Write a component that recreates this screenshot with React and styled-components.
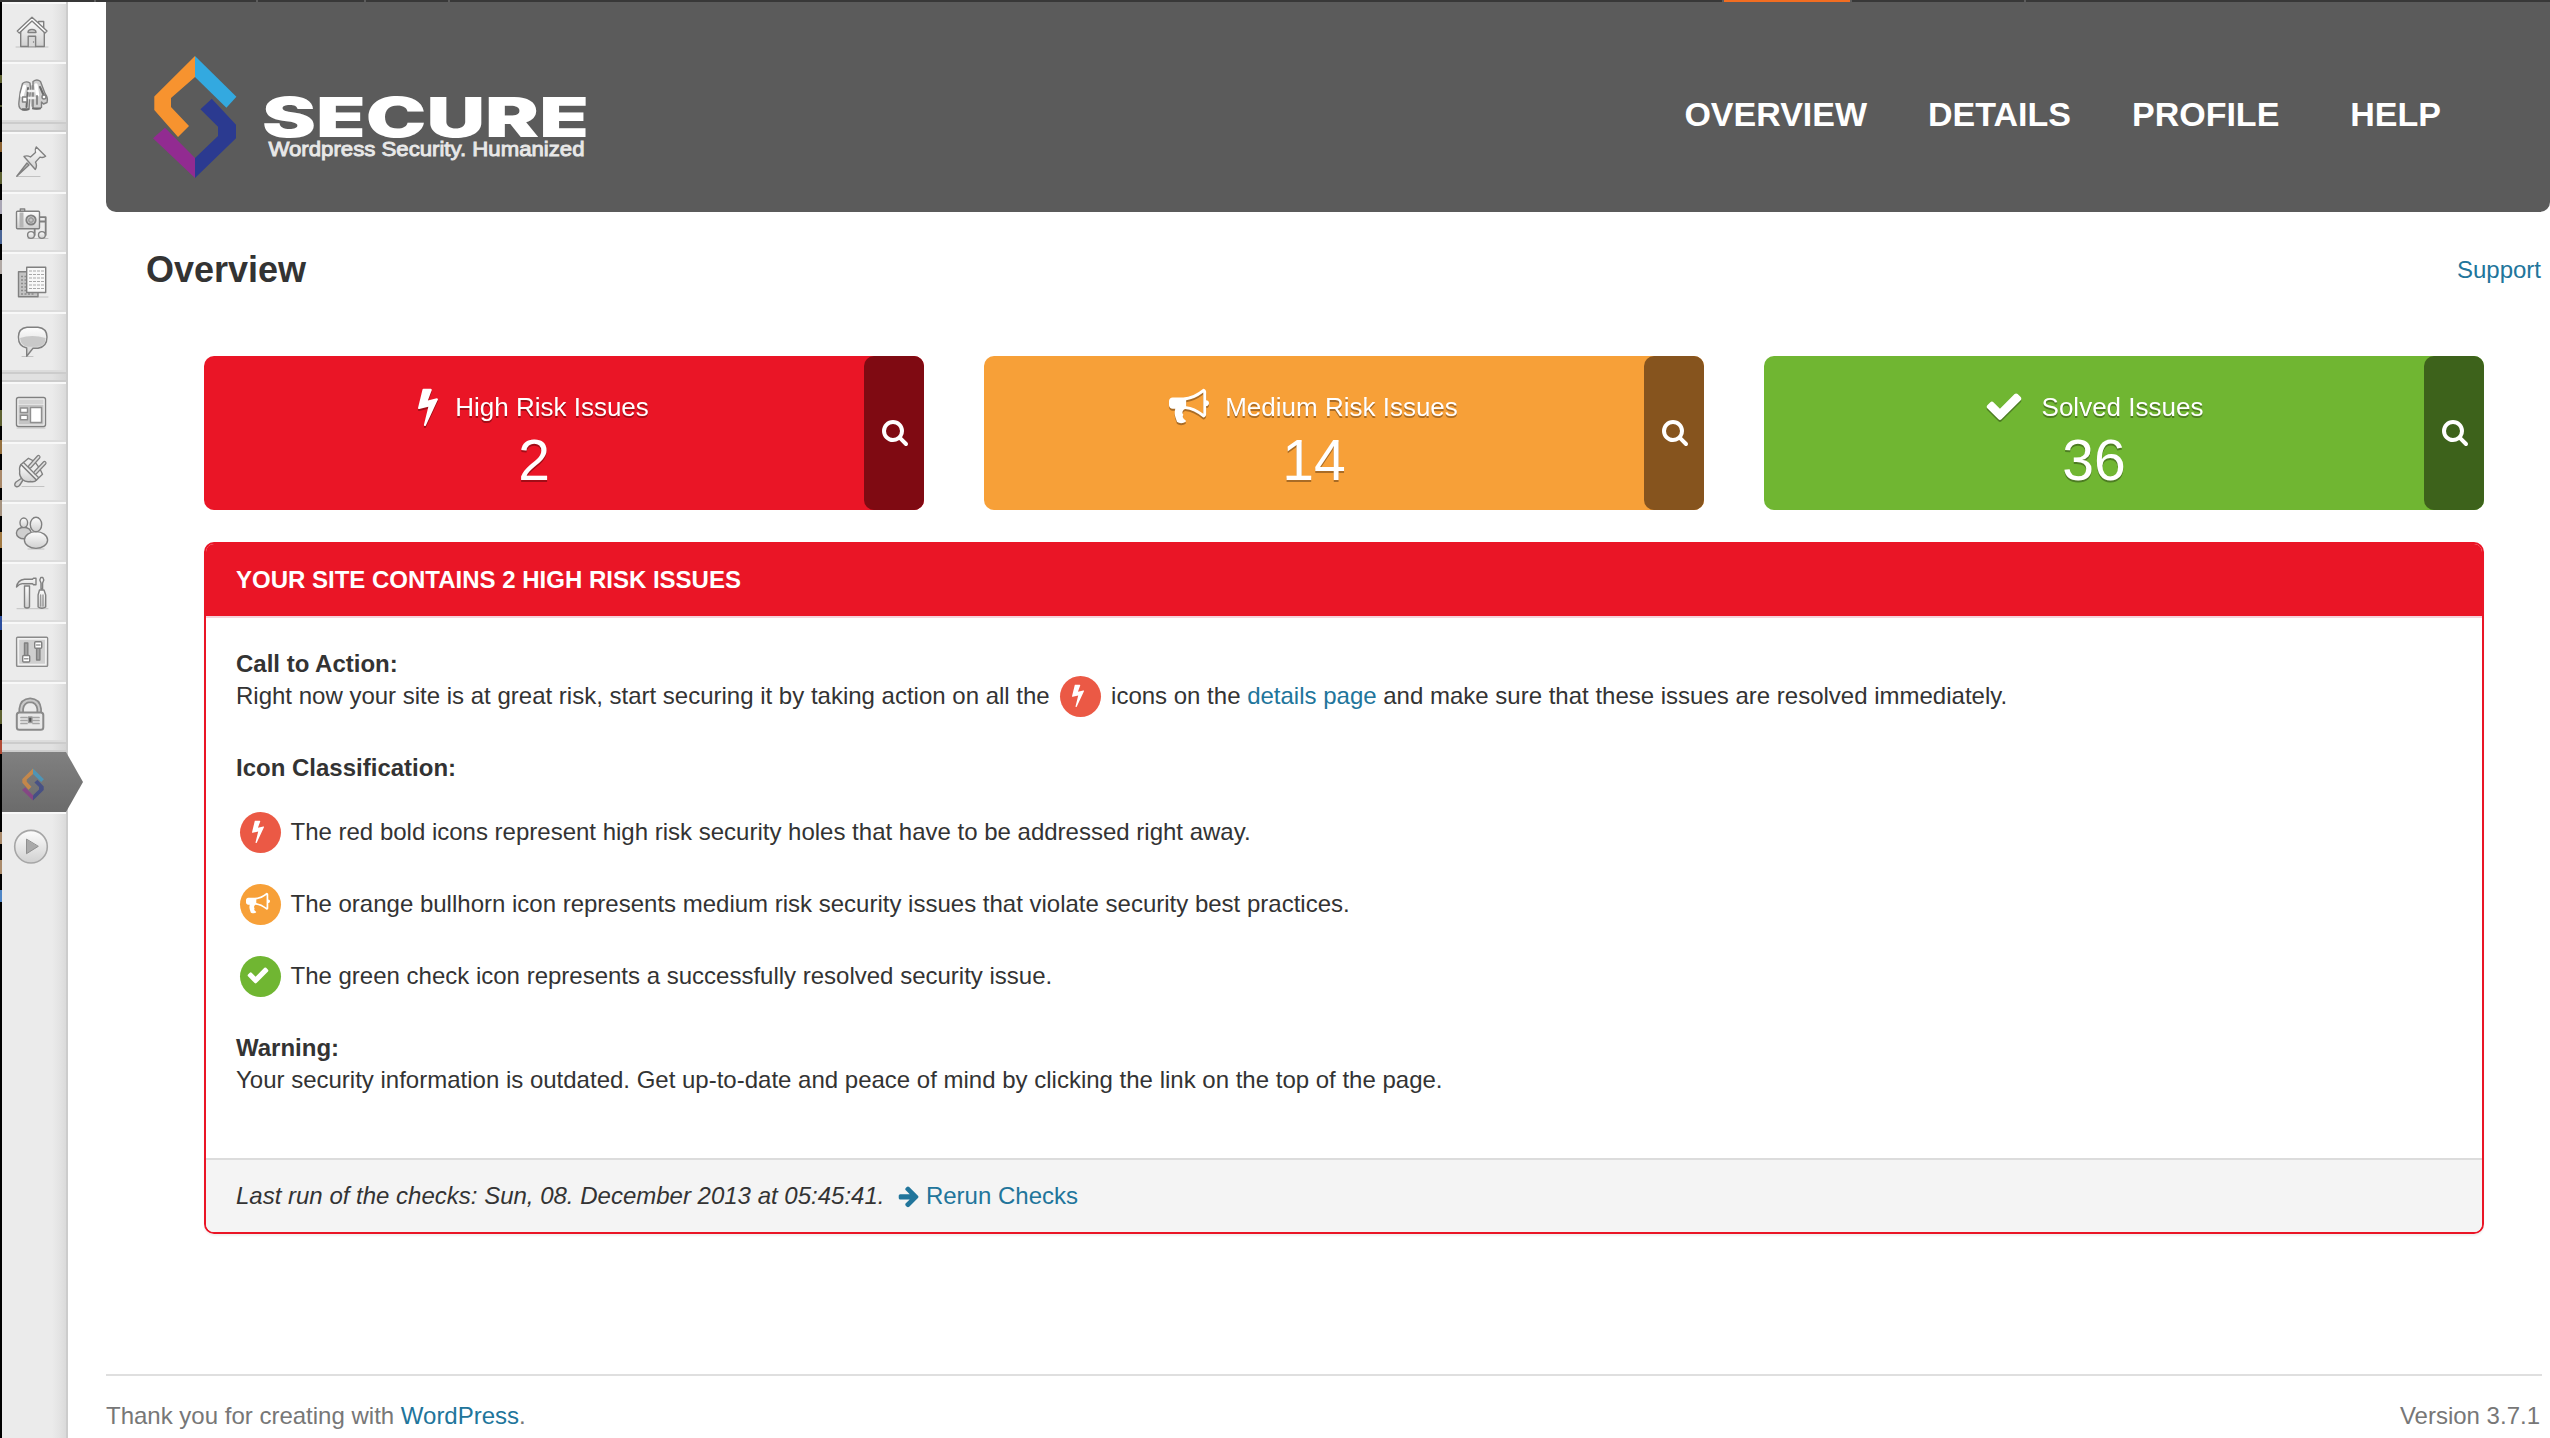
import React from "react";
import styled, { createGlobalStyle } from "styled-components";

const RED = "#ea1526";
const LINK = "#21759b";

const GlobalStyle = createGlobalStyle`
  *, *::before, *::after { box-sizing: border-box; }
  body {
    margin: 0;
    background: #fff;
    color: #333;
    font: 24px/32px "Liberation Sans", Arial, sans-serif;
    overflow: hidden;
  }
`;

/* ---------- frame ---------- */

const Page = styled.div`
  display: flex;
  flex-direction: column;
  height: 1438px;
`;

const TopStrip = styled.div`
  display: flex;
  flex: none;
  height: 2px;
  background: #383838;
`;

const StripTab = styled.span`
  width: ${(p) => p.$w}px;
  border-right: 2px solid #5c5c5c;
  background: ${(p) => (p.$active ? "#f26d21" : "transparent")};
`;

const Columns = styled.div`
  display: flex;
  flex: 1;
  min-height: 0;
`;

const BackdropEdge = styled.div`
  flex: none;
  width: 2px;
  background: linear-gradient(
    #000 73px, #5d6132 73px 81px, #000 81px 103px, #4a4f2a 103px 105px,
    #000 105px 140px, #8b6232 140px 150px, #000 150px 170px, #5d6132 170px 182px,
    #000 182px 198px, #a9a6b5 198px 212px, #000 212px 228px, #4a6596 228px 242px,
    #000 242px 258px, #b0a8a4 258px 272px, #000 272px 408px, #5d6132 408px 424px,
    #000 424px 438px, #94703f 438px 452px, #000 452px 468px, #a9896a 468px 486px,
    #000 486px 498px, #a5927f 498px 514px, #000 514px 530px, #a27a44 530px 546px,
    #000 546px 614px, #2b4d9c 614px 628px, #000 628px 708px, #5d6132 708px 722px,
    #000 722px 738px, #b04a35 738px 752px, #000 752px 830px, #a98a6b 830px 842px,
    #000 842px 858px, #a98a6b 858px 872px, #000 872px 888px, #4f86c6 888px 900px,
    #000 900px
  );
`;

/* ---------- sidebar ---------- */

const Sidebar = styled.nav`
  flex: none;
  display: flex;
  flex-direction: column;
  width: 66px;
  border-right: 2px solid #ccc;
  background: linear-gradient(90deg, #ebebeb 50px, #e4e4e4 57px, #dadada 64px);
`;

const MenuItem = styled.a`
  display: block;
  height: ${(p) => (p.$last ? "auto" : "60px")};
  border-top: 2px solid #f8f8f8;
  border-bottom: ${(p) => (p.$last ? "none" : "2px solid #dcdcdc")};
`;

const ActiveItem = styled.a`
  display: block;
  width: 81px;
  height: 60px;
  background: linear-gradient(#808080, #6b6b6b);
  clip-path: polygon(0 0, 64px 0, 81px 30px, 64px 60px, 0 60px);
`;

const MenuGap = styled.div`
  height: 10px;
  border: solid #ccc;
  border-width: 2px 0;
  background: linear-gradient(90deg, #e1e1e1 50px, #d4d4d4 64px);
`;

const Glyph = styled.svg`
  display: block;
  width: 64px;
  height: 60px;
  margin-top: ${(p) => (p.$flush ? 0 : -2)}px;
  fill: url(#metal);
  stroke: #808080;
  stroke-width: 1.4;
  stroke-linejoin: round;
  stroke-linecap: round;
`;

const Shadow = ({ x1, x2, y }) => (
  <path d={`M${x1} ${y}H${x2}`} stroke="#c2c2c2" strokeWidth="1" />
);

const HomeGlyph = () => (
  <Glyph viewBox="0 0 64 60">
    <defs>
      <linearGradient id="metal" x1="0" y1="0" x2="0" y2="1">
        <stop offset="0" stopColor="#fdfdfd" />
        <stop offset="1" stopColor="#d0d0d0" />
      </linearGradient>
    </defs>
    <Shadow x1={14} x2={46} y={45} />
    <path d="M36.5 25v-5.500h5.200v10" fill="#f2f2f2" />
    <path d="M18.700 29v15.500h23.600V29L30 17.500z" />
    <path d="M30 15.300L15.300 29l2 2L30 19l13 12 2-2z" fill="#fff" />
    <path d="M26.200 44.500V34.200h7.400v10.300M26 30.500q0-3 4-3t4 3z" fill="#d8d8d8" />
    <circle cx="31.500" cy="40" r=".7" fill="#777" stroke="none" />
  </Glyph>
);

const BinocularsGlyph = () => (
  <Glyph viewBox="0 0 64 60">
    <path d="M20.500 21.500q3.500-3 7.500-.5l.5 5-1.500 21q-4 2.500-7.500.5-3.500-2-2.500-8 .5-9 3.500-18z" fill="#d6d6d6" />
    <path d="M31 19.500q4-3 7.500 0l4.500 12q3.500 5 2 9l-3.500 1.500-2-2v5.500q-4.500 3-8.500.5z" fill="#cfcfcf" />
    <path d="M22.500 24.500l-2.500 9M34 23l1.500 10" stroke="#fff" strokeWidth="3.500" />
    <path d="M26 26l-1.500 19M38 25l4 9" stroke="#6a6a6a" strokeWidth="2" />
    <path d="M35 34v8M30.500 24v20" stroke="#8a8a8a" strokeWidth="2" />
    <path d="M26.500 29h6M26.500 36h6" stroke="#f0f0f0" strokeWidth="2.500" />
    <path d="M20.500 47.300h6M31 46.500h7" stroke="#6d6d6d" strokeWidth="2" />
    <rect x="20.500" y="35" width="4.500" height="5" fill="#fff" />
    <circle cx="42" cy="35" r="2" fill="#fff" />
  </Glyph>
);

const PinGlyph = () => (
  <Glyph viewBox="0 0 64 60">
    <Shadow x1={15} x2={38} y={44.5} />
    <path d="M27 33L14.800 44.300 25 31z" fill="#bbb" />
    <path d="M22 24.500q3-1.500 6.500.5l5-4.500q-1-3 .8-5.600l9.300 9.300q-2.500 2-5.600.9l-4.500 5q2 3.500-.2 7.400z" />
  </Glyph>
);

const MediaGlyph = () => (
  <Glyph viewBox="0 0 64 60">
    <Shadow x1={26} x2={46} y={46.5} />
    <path d="M32.700 43V25.200h11V43M32.700 29.500h11" fill="none" strokeWidth="1.800" />
    <circle cx="29" cy="43" r="3.400" />
    <circle cx="39.900" cy="43" r="3.400" />
    <path d="M18.300 19v-2h4.400v2" />
    <rect x="14.500" y="19.200" width="23" height="17.500" rx="1" />
    <path d="M17.500 20.500h4v15h-4z" fill="#b5b5b5" stroke="none" />
    <circle cx="29" cy="28" r="4.600" strokeWidth="2" />
    <circle cx="29" cy="28" r="2.300" fill="#c5c5c5" stroke="#999" />
  </Glyph>
);

const PagesGlyph = () => (
  <Glyph viewBox="0 0 64 60">
    <Shadow x1={36} x2={46} y={45} />
    <path d="M16.500 19.700H36v25H16.500z" fill="#c3c3c3" />
    <path
      d="M19 24.500h5M19 28h5M19 31.500h5M19 35h5M19 38.500h5M19 42h14"
      stroke="#8c8c8c"
      strokeDasharray="2 1.500"
      strokeLinecap="butt"
    />
    <path d="M24.700 15.200h19v25.300h-19z" fill="#f8f8f8" />
    <path
      d="M27 19h15M27 22.500h15M27 26h15M27 29.500h15M27 33h15M27 36.500h15"
      stroke="#a8a8a8"
      strokeWidth="1"
      strokeDasharray="3 1"
      strokeLinecap="butt"
    />
  </Glyph>
);

const CommentGlyph = () => (
  <Glyph viewBox="0 0 64 60">
    <Shadow x1={20} x2={31} y={44.5} />
    <path d="M25 15.200h11q9 1 9 9.800 0 10-9 11.200h-5l-6.300 8v-8.200q-8.300-1.500-8.300-11 0-8.800 8.600-9.800z" />
    <path d="M18 26q12-4 25.500 0 0 8-8 8.800H26q-7-.800-8-8.800z" fill="#c9c9c9" stroke="none" />
  </Glyph>
);

const AppearanceGlyph = () => (
  <Glyph viewBox="0 0 64 60">
    <Shadow x1={15} x2={43} y={46} />
    <rect x="14.500" y="15.500" width="29" height="29" rx="2" fill="#f4f4f4" />
    <path d="M16.500 17.500h25v5h-25z" fill="#d3d3d3" stroke="none" />
    <path d="M16.500 23h25v19.500h-25z" fill="#c4c4c4" stroke="none" />
    <g fill="#fff" stroke="#8f8f8f">
      <path d="M18.500 26h7v4.500h-7zM18.500 33.300h7v4.500h-7zM28.500 25.500h11v15h-11z" />
    </g>
  </Glyph>
);

const PluginGlyph = () => (
  <Glyph viewBox="0 0 64 60">
    <Shadow x1={20} x2={42} y={44.5} />
    <path d="M20 36l-6 4q-2.500 3 0 4.500 2 .7 3.500-1l3.500-5.500z" fill="#ddd" />
    <path d="M19 22.500L34.500 38q-2 2.500-6 1.500-5 1-8-2-3.500-4-2.800-8-.7-4.500 1.300-7z" />
    <path d="M19 22.500l7.500-6.200q9 3 14 16L34.500 38z" fill="#ececec" />
    <path d="M21.500 20.500L36.500 35.500" fill="none" />
    <path d="M28 24.500l8.500-9.500M33.500 30.500L42.500 21" stroke="#808080" strokeWidth="4.200" />
    <path d="M28 24.500l8.500-9.500M33.500 30.500L42.500 21" stroke="#dcdcdc" strokeWidth="1.800" />
  </Glyph>
);

const UsersGlyph = () => (
  <Glyph viewBox="0 0 64 60">
    <Shadow x1={26} x2={42} y={47} />
    <ellipse cx="21.800" cy="31" rx="7.400" ry="5.800" fill="#cfcfcf" />
    <ellipse cx="21.800" cy="20.800" rx="3.800" ry="4.800" />
    <ellipse cx="34" cy="38" rx="11.600" ry="8.400" />
    <ellipse cx="34" cy="22.500" rx="5.700" ry="7.300" />
  </Glyph>
);

const ToolsGlyph = () => (
  <Glyph viewBox="0 0 64 60">
    <Shadow x1={15} x2={46} y={46.700} />
    <path d="M22.500 24h5v21q-2.500 2-5 0z" />
    <path d="M14.500 25q1-7 8-7.800h8l1-1h2.500v6.500h-2.500l-1-1H22q-4-.7-7.500 3.300z" />
    <path d="M39 27v-6l-1.200-3 1-2.500h2l1 2.500-1.200 3v6z" />
    <path d="M37.500 28h4.500l1.700 5v12q-3.800 2.500-7.600 0V33z" />
    <path d="M38.600 33v11M41 33v11" stroke="#999" />
  </Glyph>
);

const SettingsGlyph = () => (
  <Glyph viewBox="0 0 64 60">
    <rect x="14.600" y="15.200" width="31" height="29.200" rx="1" stroke="#8a8a8a" />
    <rect x="16.500" y="17" width="27.200" height="25.500" fill="#cfcfcf" stroke="#f1f1f1" />
    <path d="M22.500 21h3.300v18h-3.300zM34.600 21h3.300v17h-3.300z" fill="#a3a3a3" />
    <rect x="20.700" y="33.500" width="7" height="6.500" rx="1" fill="#fff" />
    <rect x="32.700" y="19.700" width="7" height="6.500" rx="1" fill="#fff" />
    <path d="M22.500 36.700h3.500M34.500 23h3.500" stroke="#999" />
  </Glyph>
);

const LockGlyph = () => (
  <Glyph viewBox="0 0 64 60">
    <path d="M19.200 31v-4q1-8.300 9-8.700 8 .4 9 8.700v4" fill="none" stroke="#8a8a8a" strokeWidth="5.500" />
    <path d="M19.200 31v-4q1-8.300 9-8.700 8 .4 9 8.700v4" fill="none" stroke="#c9c9c9" strokeWidth="2" />
    <rect x="14.800" y="30.500" width="26.500" height="17.300" rx="2.500" fill="#e8e8e8" stroke="#8a8a8a" strokeWidth="2" />
    <path
      d="M19 35.500h6M19 38.500h6M19 41.500h6M31 35.500h6M31 38.500h6M31 41.500h6"
      stroke="#a5a5a5"
      strokeWidth="1.700"
    />
    <rect x="26.500" y="35" width="3.500" height="5.500" fill="#555" stroke="#999" />
  </Glyph>
);

const PlayGlyph = () => (
  <Glyph viewBox="0 0 64 60">
    <circle cx="29" cy="34.700" r="16.300" stroke="#a6a6a6" strokeWidth="1.600" />
    <path d="M24.500 27.500v14.200l11.500-7.200z" fill="#a9a9a9" stroke="#8f8f8f" strokeWidth="1" />
  </Glyph>
);

const MarkShapes = () => (
  <>
    <path fill="#f7932f" d="M42 0v21L18 42v9l18 19-11 11L1.300 54V40.500z" />
    <path fill="#33a9e0" d="M42 0l41.400 40.700-10 11L42 21z" />
    <path fill="#2b3a90" d="M58.800 42.700L83 68.700v13.600L42 122v-20l23-22v-9.300L47.400 53.300z" />
    <path fill="#922b91" d="M12 71.700L42 102v20L0 82.300z" />
  </>
);

const ActiveGlyph = () => (
  <Glyph viewBox="0 0 64 60" $flush>
    <g transform="translate(20 16.500) scale(.262)" opacity=".6" stroke="none">
      <MarkShapes />
    </g>
  </Glyph>
);

/* ---------- Font Awesome style symbols ---------- */

const SYMBOLS = {
  bolt: "M1333 566q18 20 7 44l-540 1157q-13 25-42 25-4 0-14-2-17-5-25.500-19t-4.500-30l197-808-406 101q-4 1-12 1-18 0-31-11-18-15-13-39l201-825q4-14 16-23t28-9h328q19 0 32 12.500t13 29.500q0 8-5 18l-171 463 396-98q8-2 12-2 19 0 34 15z",
  bullhorn:
    "M1664 640q53 0 90.500 37.500t37.500 90.500-37.500 90.500-90.500 37.500v384q0 52-38 90t-90 38q-417-347-812-380-58 19-91 66t-31 100.500 40 92.500q-20 33-23 65.500t6 58 33.500 55 48 50 61.500 50.500q-29 58-111.500 83t-168.500 11.500-132-55.500q-7-23-29.500-87.500t-32-94.500-23-89-15-101 3.500-98.500 22-110.500h-122q-66 0-113-47t-47-113v-192q0-66 47-113t113-47h480q435 0 896-384 52 0 90 38t38 90v384zm-128 604v-954q-394 302-768 343v270q377 42 768 341z",
  check:
    "M1671 566q0 40-28 68l-724 724-136 136q-28 28-68 28t-68-28l-136-136-362-362q-28-28-28-68t28-68l136-136q28-28 68-28t68 28l294 295 656-657q28-28 68-28t68 28l136 136q28 28 28 68z",
  search:
    "M1216 832q0-185-131.500-316.500t-316.500-131.500-316.500 131.500-131.500 316.500 131.500 316.500 316.500 131.500 316.500-131.500 131.500-316.500zm512 832q0 52-38 90t-90 38q-54 0-90-38l-343-342q-179 124-399 124-143 0-273.500-55.500t-225-150-150-225-55.500-273.500 55.500-273.500 150-225 225-150 273.500-55.500 273.500 55.500 225 150 150 225 55.500 273.500q0 220-124 399l343 343q37 37 37 90z",
  arrow:
    "M1600 960q0 54-37 91l-651 651q-39 37-91 37-51 0-90-37l-75-75q-38-38-38-91t38-91l293-293h-704q-52 0-84.500-37.500t-32.500-90.500v-128q0-53 32.500-90.500t84.500-37.500h704l-293-294q-38-36-38-90t38-90l75-75q38-38 90-38 53 0 91 38l651 651q37 35 37 90z",
};

const SymbolSvg = styled.svg`
  flex: none;
  display: block;
  width: ${(p) => p.$size}px;
  height: ${(p) => p.$size}px;
  fill: currentColor;
  overflow: visible;
`;

const Symbol = ({ name, size }) => (
  <SymbolSvg viewBox="0 0 1792 1792" $size={size}>
    <path d={SYMBOLS[name]} />
  </SymbolSvg>
);

/* ---------- header ---------- */

const Main = styled.main`
  display: flex;
  flex-direction: column;
  flex: 1;
  margin-left: 38px;
`;

const Header = styled.header`
  display: flex;
  justify-content: space-between;
  height: 210px;
  padding: 54px 109px 0 47px;
  border-radius: 0 0 10px 10px;
  background: #5b5b5b;
  color: #fff;
`;

const Logo = styled.svg`
  display: block;
  width: 436px;
  height: 124px;
`;

const Nav = styled.nav`
  display: flex;
  padding-top: 36px;
  font-size: 34px;
  font-weight: bold;
  line-height: 44px;
`;

const NavLink = styled.a`
  margin-left: ${(p) => p.$gap || 0}px;
`;

const TitleRow = styled.div`
  display: flex;
  justify-content: space-between;
  align-items: center;
  height: 112px;
  padding: 4px 9px 0 40px;
`;

const Title = styled.h2`
  margin: 0;
  font-size: 36px;
  line-height: 44px;
`;

const Link = styled.a`
  color: ${LINK};
`;

/* ---------- cards ---------- */

const Cards = styled.section`
  display: grid;
  grid-template-columns: repeat(3, 720px);
  gap: 60px;
  margin: 32px 0 32px 98px;
`;

const Card = styled.article`
  display: flex;
  height: 154px;
  border-radius: 10px;
  background: ${(p) => p.$color};
  color: #fff;
`;

const CardBody = styled.div`
  flex: 1;
  padding-top: 29px;
  text-align: center;
`;

const CardLabel = styled.div`
  display: flex;
  justify-content: center;
  align-items: center;
  gap: ${(p) => p.$gap}px;
  height: 41px;
  margin-left: -1px;
  font-size: 26px;
  filter: drop-shadow(0 2px 0 ${(p) => p.$shadow});

  > svg { margin: 0 ${(p) => p.$pull}px; }
`;

const LabelText = styled.span`
  padding-top: 2px;
`;

const CardCount = styled.div`
  padding-top: 2px;
  font-size: 57px;
  line-height: 64px;
  text-shadow: 0 2px 0 ${(p) => p.$shadow};
`;

const CardButton = styled.a`
  display: flex;
  align-items: center;
  justify-content: center;
  width: 60px;
  padding: 0 0 2px 1px;
  border-radius: 10px;
  background: ${(p) => p.$color};
`;

/* ---------- panel ---------- */

const Panel = styled.section`
  width: 2280px;
  margin-left: 98px;
  border: 2px solid ${RED};
  border-radius: 10px;
  overflow: hidden;
  box-shadow: 0 2px 2px rgba(0, 0, 0, 0.06);
`;

const PanelHead = styled.h3`
  margin: 0;
  padding: 20px 30px;
  border-bottom: 2px solid #f4d3dc;
  background: ${RED};
  color: #fff;
  font-size: 24px;
  line-height: 32px;
`;

const PanelBody = styled.div`
  padding: 30px 30px 62px;
`;

const Para = styled.p`
  margin: ${(p) => p.$top || 0}px 0 0;
  white-space: nowrap;
`;

const Strong = styled.strong`
  display: block;
`;

const Badge = styled.span`
  display: inline-block;
  flex: none;
  width: 41px;
  height: 41px;
  padding: 7px 0 0 6px;
  border-radius: 50%;
  background: ${(p) => p.$color};
  color: #fff;
`;

const InlineBadge = styled(Badge)`
  margin: -11px 3px -9px 4px;
  vertical-align: middle;
`;

const Legend = styled.ul`
  display: flex;
  flex-direction: column;
  gap: 40px;
  margin: 32px 0 0;
  padding: 0;
  list-style: none;
`;

const LegendItem = styled.li`
  display: flex;
  align-items: center;
  gap: 9.500px;
  height: 32px;
  padding-left: 4px;
`;

const PanelFoot = styled.footer`
  display: flex;
  align-items: center;
  height: 74px;
  padding: 0 30px;
  border-top: 2px solid #dcdcdc;
  background: #f4f4f4;

  svg { margin: 0 5px 0 12.500px; color: ${LINK}; }
`;

const PageFoot = styled.footer`
  display: flex;
  justify-content: space-between;
  margin: 140px 8px 0 0;
  padding: 24px 2px 0 0;
  border-top: 2px solid #dfdfdf;
  color: #777;
`;

/* ---------- content ---------- */

const CARDS = [
  { icon: "bolt", label: "High Risk Issues", count: 2, color: RED, dark: "#7f0a12", gap: 17, pull: -10 },
  { icon: "bullhorn", label: "Medium Risk Issues", count: 14, color: "#f7a038", dark: "#86541e", gap: 16, pull: 0 },
  { icon: "check", label: "Solved Issues", count: 36, color: "#70b632", dark: "#3d621b", gap: 18, pull: 0 },
];

const LEGEND = [
  {
    icon: "bolt",
    color: "#eb5945",
    text: "The red bold icons represent high risk security holes that have to be addressed right away.",
  },
  {
    icon: "bullhorn",
    color: "#f7a038",
    text: "The orange bullhorn icon represents medium risk security issues that violate security best practices.",
  },
  {
    icon: "check",
    color: "#70b632",
    text: "The green check icon represents a successfully resolved security issue.",
  },
];

const MENU = [
  [HomeGlyph, BinocularsGlyph],
  [PinGlyph, MediaGlyph, PagesGlyph, CommentGlyph],
  [AppearanceGlyph, PluginGlyph, UsersGlyph, ToolsGlyph, SettingsGlyph, LockGlyph],
];

export default function App() {
  return (
    <Page>
      <GlobalStyle />
      <TopStrip>
        <StripTab $w={96} />
        <StripTab $w={162} />
        <StripTab $w={108} />
        <StripTab $w={84} />
        <StripTab $w={1274} />
        <StripTab $w={128} $active />
        <StripTab $w={174} />
      </TopStrip>
      <Columns>
        <BackdropEdge />
        <Sidebar>
          {MENU.map((group, i) => (
            <React.Fragment key={i}>
              {group.map((Item, j) => (
                <MenuItem key={j}>
                  <Item />
                </MenuItem>
              ))}
              <MenuGap />
            </React.Fragment>
          ))}
          <ActiveItem>
            <ActiveGlyph />
          </ActiveItem>
          <MenuItem $last>
            <PlayGlyph />
          </MenuItem>
        </Sidebar>

        <Main>
          <Header>
            <Logo viewBox="0 0 436 124">
              <MarkShapes />
              <text
                x="109"
                y="80.500"
                fill="#fff"
                fontFamily="Inter, 'DejaVu Sans', sans-serif"
                fontWeight="900"
                fontSize="55"
                textLength="327"
                lengthAdjust="spacingAndGlyphs"
              >
                SECURE
              </text>
              <text
                x="115.500"
                y="100"
                fill="#e8e8e8"
                stroke="#e8e8e8"
                strokeWidth=".9"
                fontFamily="'Liberation Sans', Arial, sans-serif"
                fontSize="21"
                textLength="316"
                lengthAdjust="spacingAndGlyphs"
              >
                Wordpress Security. Humanized
              </text>
            </Logo>
            <Nav>
              <NavLink>OVERVIEW</NavLink>
              <NavLink $gap={61}>DETAILS</NavLink>
              <NavLink $gap={61}>PROFILE</NavLink>
              <NavLink $gap={71}>HELP</NavLink>
            </Nav>
          </Header>

          <TitleRow>
            <Title>Overview</Title>
            <Link>Support</Link>
          </TitleRow>

          <Cards>
            {CARDS.map((c) => (
              <Card key={c.label} $color={c.color}>
                <CardBody>
                  <CardLabel $gap={c.gap} $pull={c.pull} $shadow={c.dark + "b0"}>
                    <Symbol name={c.icon} size={40} />
                    <LabelText>{c.label}</LabelText>
                  </CardLabel>
                  <CardCount $shadow={c.dark + "b0"}>{c.count}</CardCount>
                </CardBody>
                <CardButton $color={c.dark}>
                  <Symbol name="search" size={28} />
                </CardButton>
              </Card>
            ))}
          </Cards>

          <Panel>
            <PanelHead>YOUR SITE CONTAINS 2 HIGH RISK ISSUES</PanelHead>
            <PanelBody>
              <Para>
                <Strong>Call to Action:</Strong>
                Right now your site is at great risk, start securing it by taking action on all the{" "}
                <InlineBadge $color="#eb5945">
                  <Symbol name="bolt" size={24} />
                </InlineBadge>{" "}
                icons on the <Link>details page</Link> and make sure that these issues are resolved
                immediately.
              </Para>
              <Para $top={40}>
                <Strong>Icon Classification:</Strong>
              </Para>
              <Legend>
                {LEGEND.map((l) => (
                  <LegendItem key={l.icon}>
                    <Badge $color={l.color}>
                      <Symbol name={l.icon} size={24} />
                    </Badge>
                    {l.text}
                  </LegendItem>
                ))}
              </Legend>
              <Para $top={40}>
                <Strong>Warning:</Strong>
                Your security information is outdated. Get up-to-date and peace of mind by clicking
                the link on the top of the page.
              </Para>
            </PanelBody>
            <PanelFoot>
              <em>Last run of the checks: Sun, 08. December 2013 at 05:45:41.</em>
              <Symbol name="arrow" size={24} />
              <Link>Rerun Checks</Link>
            </PanelFoot>
          </Panel>

          <PageFoot>
            <span>
              Thank you for creating with <Link>WordPress</Link>.
            </span>
            <span>Version 3.7.1</span>
          </PageFoot>
        </Main>
      </Columns>
    </Page>
  );
}
